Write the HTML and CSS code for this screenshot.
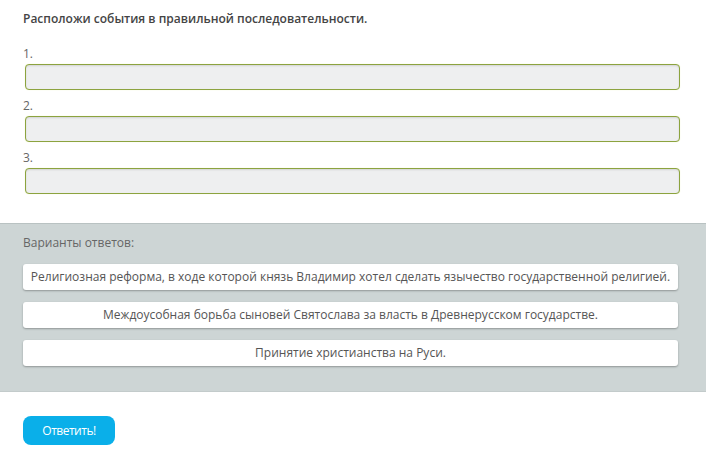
FILE: index.html
```html
<!DOCTYPE html>
<html lang="ru">

<head>
    <meta charset="UTF-8">
    <meta name="viewport" content="width=device-width, initial-scale=1.0">
    <title>Задание - последовательность</title>
    <link rel="stylesheet" href="styles.css">
</head>

<body>
    <!-- вопрос и поля для ответа -->
    <div class="task">
        <p class="question">Расположи события в правильной последовательности.</p>
        <ol class="slots">
            <li>
                <span class="slotNum">1.</span>
                <div class="slotBox"></div>
            </li>
            <li>
                <span class="slotNum">2.</span>
                <div class="slotBox"></div>
            </li>
            <li>
                <span class="slotNum">3.</span>
                <div class="slotBox"></div>
            </li>
        </ol>
    </div>

    <!-- варианты -->
    <div class="variants">
        <p class="variantsTitle">Варианты ответов:</p>
        <ul class="options">
            <li>Религиозная реформа, в ходе которой князь Владимир хотел сделать язычество государственной религией.</li>
            <li>Междоусобная борьба сыновей Святослава за власть в Древнерусском государстве.</li>
            <li>Принятие христианства на Руси.</li>
        </ul>
    </div>

    <!-- кнопка -->
    <div class="actions">
        <a href="#" class="answerBtn">Ответить!</a>
    </div>
</body>

</html>
```

FILE: styles.css
```css
/* reset */
* {
    margin: 0;
    padding: 0;
    box-sizing: border-box;
}

body {
    font-family: "Open Sans", "Liberation Sans", sans-serif;
    font-size: 12px;
    color: #555;
    background: #fff;
}

ol,
ul {
    list-style: none;
}

/* question */
.task {
    padding: 11px 26px 29px 23px;
}

.question {
    font-weight: 600;
    color: #444;
    line-height: 16px;
    margin-bottom: 17px;
}

.slots {
    display: flex;
    flex-direction: column;
    gap: 6px;
}

.slots li {
    display: flex;
    flex-direction: column;
}

.slotNum {
    line-height: 20px;
    height: 20px;
    color: #666;
}

.slotBox {
    height: 26px;
    margin-left: 2px;
    background: #eeeff0;
    border: 1px solid #8ca33f;
    border-radius: 4px;
    box-shadow: inset 0 1px 2px rgba(0, 0, 0, .12), 0 0 1px #e4efb0;
}

/* variants */
.variants {
    background: #cdd5d5;
    border-top: 1px solid #b9c2c2;
    border-bottom: 1px solid #c3cbcb;
    padding: 11px 28px 25px 23px;
}

.variantsTitle {
    line-height: 16px;
    color: #666;
    margin-bottom: 13px;
}

.options {
    display: flex;
    flex-direction: column;
    gap: 12px;
}

.options li {
    height: 26px;
    line-height: 26px;
    background: #fff;
    border-radius: 3px;
    box-shadow: 0 1px 2px rgba(0, 0, 0, .3);
    text-align: center;
    color: #555;
    white-space: nowrap;
}

/* answer button */
.actions {
    padding: 24px 23px;
}

.answerBtn {
    display: inline-block;
    width: 92px;
    height: 29px;
    line-height: 29px;
    text-align: center;
    background: #0aafe9;
    border-radius: 8px;
    color: #fff;
    text-decoration: none;
    font-size: 12px;
    letter-spacing: -0.5px;
}
```
